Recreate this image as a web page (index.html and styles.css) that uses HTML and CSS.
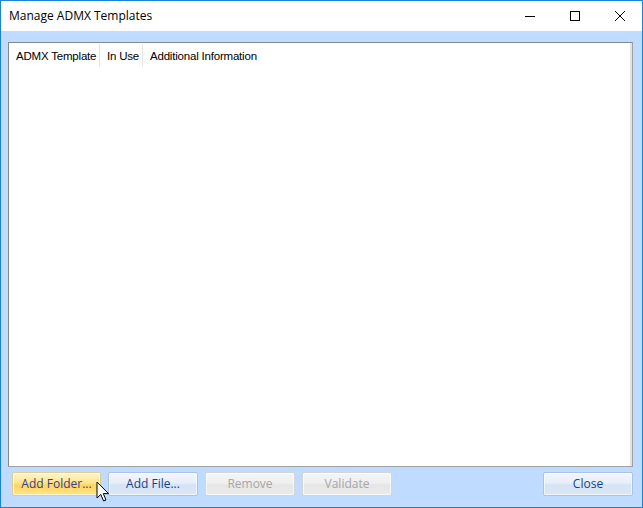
FILE: index.html
```html
<!DOCTYPE html>
<html lang="en">
<head>
  <meta charset="UTF-8">
  <title>Manage ADMX Templates</title>
  <link rel="stylesheet" href="styles.css">
</head>
<body>
  <div class="window">
    <div class="titlebar">
      <div class="title">Manage ADMX Templates</div>
      <div class="caption-buttons">
        <div class="caption-btn">
          <svg width="10" height="10" viewBox="0 0 10 10"><path d="M0 5.5H10" stroke="#000" stroke-width="1"/></svg>
        </div>
        <div class="caption-btn">
          <svg width="10" height="10" viewBox="0 0 10 10"><rect x="0.5" y="0.5" width="9" height="9" fill="none" stroke="#000" stroke-width="1"/></svg>
        </div>
        <div class="caption-btn">
          <svg width="10" height="10" viewBox="0 0 10 10"><path d="M0 0L10 10M10 0L0 10" stroke="#000" stroke-width="1"/></svg>
        </div>
      </div>
    </div>

    <div class="client">
      <div class="listview">
        <div class="list-header">
          <div class="col col-template">ADMX Template</div>
          <div class="col col-inuse">In Use</div>
          <div class="col col-info">Additional Information</div>
        </div>
      </div>

      <div class="button-row">
        <button class="btn hover">Add Folder...</button>
        <button class="btn">Add File...</button>
        <button class="btn" disabled>Remove</button>
        <button class="btn" disabled>Validate</button>
        <div class="spacer"></div>
        <button class="btn">Close</button>
      </div>
    </div>

    <svg class="cursor" width="14" height="22" viewBox="0 0 14 22">
      <path d="M1 1V17L4.8 13.4L7.6 20L10 19L7.3 12.6H12.5Z" fill="#fff" stroke="#000" stroke-width="1" stroke-linejoin="miter"/>
    </svg>
  </div>
</body>
</html>
```

FILE: styles.css
```css
body {
  margin: 0;
  padding: 0;
  background: #fff;
  font-family: "Liberation Sans", Arial, sans-serif;
}

.window {
  position: relative;
  width: 643px;
  height: 508px;
  box-sizing: border-box;
  border: 1px solid #1883d7;
  display: flex;
  flex-direction: column;
  overflow: hidden;
}

.titlebar {
  height: 30px;
  background: #fff;
  display: flex;
  align-items: center;
  justify-content: space-between;
}

.title {
  padding-left: 8px;
  font-family: "Open Sans", "Noto Sans", sans-serif;
  font-size: 12px;
  color: #000;
  margin-top: -1px;
}

.caption-buttons {
  display: flex;
  height: 100%;
}

.caption-btn {
  width: 45px;
  height: 100%;
  display: flex;
  align-items: center;
  justify-content: center;
}

.client {
  flex: 1;
  background: #bfdbff;
  display: flex;
  flex-direction: column;
  padding: 11px 9px 11px 7px;
}

.listview {
  flex: 1;
  background: #fff;
  border: 1px solid #828790;
  border-right-color: #a0a0a0;
  border-bottom-color: #a0a0a0;
  box-shadow: inset -2px 0 0 #e3e3e3;
}

.list-header {
  display: flex;
  height: 24px;
  align-items: stretch;
  font-size: 11.5px;
  color: #000;
  white-space: nowrap;
}

.col {
  box-sizing: border-box;
  display: flex;
  align-items: center;
  padding-left: 7px;
  border-right: 1px solid #e5e5e5;
  margin-top: 1px;
  letter-spacing: -0.2px;
}

.col-template {
  width: 91px;
}

.col-inuse {
  width: 43px;
}

.col-info {
  border-right: none;
}

.button-row {
  display: flex;
  gap: 7px;
  margin-top: 5px;
  padding-left: 4px;
}

.spacer {
  flex: 1;
}

.btn {
  width: 90px;
  height: 24px;
  padding: 0 0 1px;
  border: 1px solid #a9c3e4;
  border-radius: 2px;
  background: linear-gradient(#f3f7fc 0%, #e6eef9 45%, #d5e3f4 55%, #dbe7f6 100%);
  box-shadow: inset 0 0 0 1px rgba(255, 255, 255, 0.6);
  font-family: "Open Sans", "Noto Sans", sans-serif;
  font-size: 12px;
  color: #15428b;
}

.btn.hover {
  width: 89px;
  border-color: #dbce99;
  background: linear-gradient(#fff6cc 0%, #ffe48c 45%, #ffd55a 55%, #ffe38d 100%);
  color: #3b3b8b;
}

.btn:disabled {
  border-color: #d5d5d5;
  background: linear-gradient(#f4f4f4 0%, #efefef 45%, #e6e6e6 55%, #ebebeb 100%);
  color: #a6a6a6;
}

.cursor {
  position: absolute;
  left: 95px;
  top: 480px;
}
```
